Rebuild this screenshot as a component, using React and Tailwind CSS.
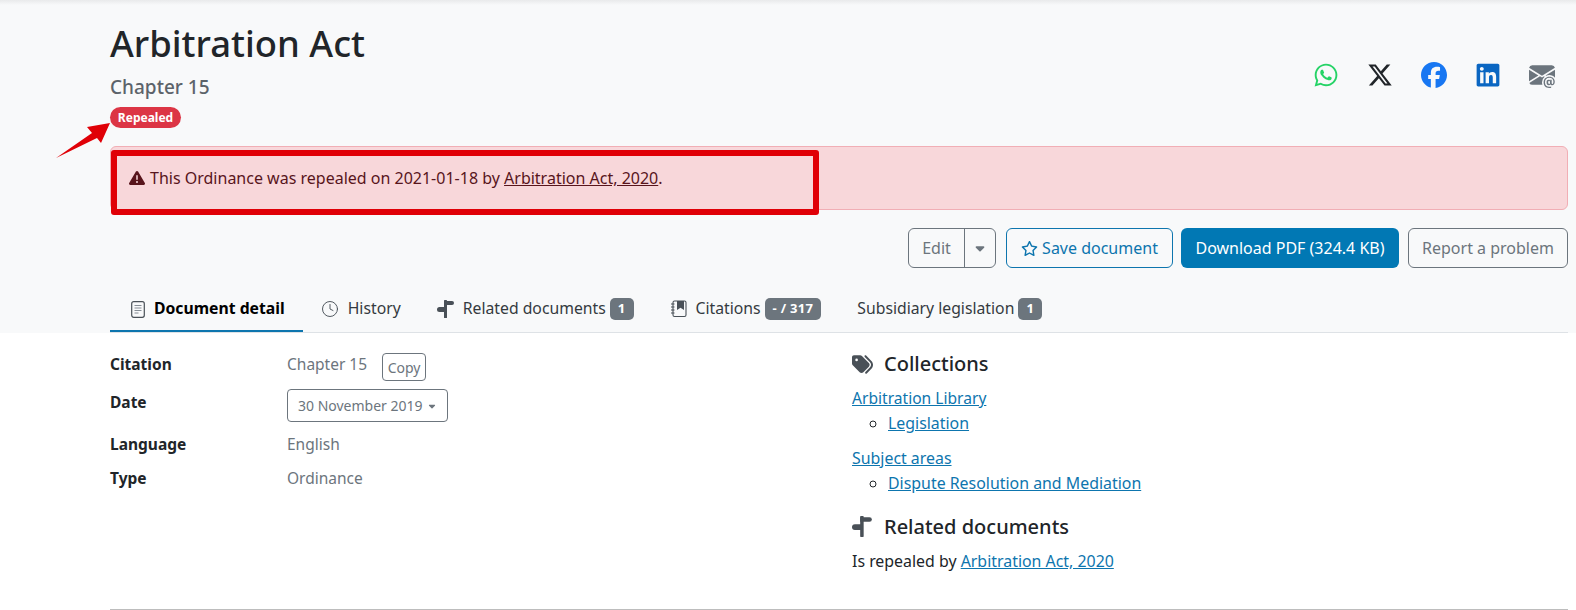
import React from "react";
import { FaWhatsapp, FaFacebook, FaLinkedin, FaXTwitter, FaRegStar, FaTags, FaTriangleExclamation, FaCaretDown } from "react-icons/fa6";
import { BsEnvelopeAtFill } from "react-icons/bs";
import { Clock } from "lucide-react";

const BookIcon = () => (
  <svg width="18" height="18" viewBox="0 0 18 18" fill="none" className="text-[#495057]">
    <rect x="3" y="1" width="13" height="15.5" rx="1.5" stroke="currentColor" strokeWidth="1.1" />
    <path d="M7 1h7v9l-3.5-2.2L7 10z" fill="currentColor" />
    <path d="M1 4h3.5M1 7h3.5M1 10h3.5M1 13h3.5" stroke="currentColor" strokeWidth="1.1" />
  </svg>
);

const DocIcon = () => (
  <svg width="14" height="17" viewBox="0 0 14 17" fill="none" className="text-[#495057]">
    <rect x="0.7" y="0.7" width="12.6" height="15.6" rx="2" stroke="currentColor" strokeWidth="1.2" />
    <path d="M3.5 4.5h7M3.5 7h7M3.5 9.5h7M3.5 12h4" stroke="#868e96" strokeWidth="1.2" />
  </svg>
);

const PostIcon = ({ size = 18 }) => (
  <svg width={size} height={size} viewBox="0 0 18 18" fill="#495057">
    <rect x="7" y="0" width="3" height="18" rx="0.6" />
    <path d="M7 1h8a2 2 0 0 1 2 2v0a2 2 0 0 1-2 2H7z" />
    <path d="M9 7H2.5a2.5 2.5 0 0 0 0 5H9z" />
  </svg>
);

const Badge = ({ children }) => (
  <span className="ml-[4px] inline-flex h-[22px] items-center rounded-[5px] bg-[#6c757d] px-[8px] text-[13px] font-bold tracking-[0.3px] text-white">
    {children}
  </span>
);

const Tab = ({ icon, label, badge, active, className }) => (
  <div
    className={`flex h-[46px] items-center border-b-2 pr-[18px] pt-[2px] text-[15.75px] ${
      active ? "border-[#0d75ae] font-bold text-black" : "border-transparent text-[#343a40]"
    } ${className || "gap-[8px] pl-[18px]"}`}
  >
    {icon}
    <span className="flex items-center">
      {label}
      {badge && <Badge>{badge}</Badge>}
    </span>
  </div>
);

const Row = ({ label, children, className, labelClass }) => (
  <div className={`flex ${className || ""}`}>
    <div className={`w-[177px] shrink-0 font-bold text-[#212529] ${labelClass || ""}`}>{label}</div>
    <div className="text-[#6c757d]">{children}</div>
  </div>
);

const linkCls = "text-[#0d75ae] underline";

const App = () => {
  return (
    <div className="h-[610px] overflow-hidden bg-white font-['Noto_Sans','Open_Sans',sans-serif] text-[15.5px] text-[#212529]">
      <div className="bg-[#f8f9fa] bg-gradient-to-b from-[#e9eaeb] to-[#f8f9fa] bg-[length:100%_5px] bg-no-repeat pl-[110px] pr-[8px] pt-[19px]">
        <div className="relative">
          <div className="flex items-start justify-between">
            <div>
              <h1 className="text-[36.4px] leading-[48px] font-medium text-[#212529]">Arbitration Act</h1>
              <div className="mt-[8px] text-[19px] leading-[24px] font-medium text-[#5c636a]">Chapter 15</div>
              <span className="mt-[8px] flex h-[21px] w-[71px] items-center justify-center rounded-full bg-[#dc3545] text-[12px] font-bold text-white">
                Repealed
              </span>
            </div>
            <div className="mt-[43px] mr-[13px] flex items-center gap-[28px]">
              <FaWhatsapp size={26} className="text-[#25d366]" />
              <FaXTwitter size={26} className="text-[#212529]" />
              <FaFacebook size={26} className="text-[#1877f2]" />
              <FaLinkedin size={26} className="text-[#0a66c2]" />
              <BsEnvelopeAtFill size={26} className="text-[#6c757d]" />
            </div>
          </div>
          <svg width="56" height="38" viewBox="0 0 56 38" className="absolute left-[-54px] top-[103px]">
            <path d="M0 36 L36 11 L31 5 L54 1 L45 21 L41 16 Z" fill="#e00007" />
          </svg>

          <div className="relative mt-[18px] flex h-[64px] items-center rounded-[6px] border border-[#f1aeb5] bg-[#f8d7da] px-[18px] text-[16px] text-[#58151c]">
            <FaTriangleExclamation size={16} className="mr-[5px]" />
            <span>
              This Ordinance was repealed on 2021-01-18 by <span className="underline">Arbitration Act, 2020</span>.
            </span>
            <div className="absolute left-0 top-[3px] h-[65px] w-[708px] rounded-[3px] border-[6px] border-[#e00007]" />
          </div>

          <div className="mt-[18px] flex justify-end gap-[8px] text-[16px]">
            <div className="mr-[2px] flex h-[40px] rounded-[6px] border border-[#6c757d] text-[#6c757d]">
              <span className="flex w-[56px] items-center justify-center border-r border-[#6c757d]">Edit</span>
              <span className="flex w-[30px] items-center justify-center"><FaCaretDown size={14} /></span>
            </div>
            <div className="flex h-[40px] w-[167px] items-center justify-center gap-[4px] rounded-[6px] border border-[#0d75ae] text-[#0d75ae]">
              <FaRegStar size={17} />
              Save document
            </div>
            <div className="flex h-[40px] w-[218px] items-center justify-center rounded-[6px] bg-[#0178b4] text-white">
              Download PDF (324.4 KB)
            </div>
            <div className="ml-[1px] flex h-[40px] w-[160px] items-center justify-center rounded-[6px] border border-[#6c757d] text-[#6c757d]">
              Report a problem
            </div>
          </div>

          <div className="mt-[18px] flex border-b border-[#dee2e6]">
            <Tab active className="gap-[9px] pl-[21px]" icon={<DocIcon />} label="Document detail" />
            <Tab className="gap-[9px] pl-[18px]" icon={<Clock size={18} strokeWidth={1.25} className="text-[#495057]" />} label="History" />
            <Tab icon={<PostIcon />} label="Related documents" badge="1" />
            <Tab icon={<BookIcon />} label="Citations" badge="- / 317" />
            <Tab label="Subsidiary legislation" badge="1" />
          </div>
        </div>
      </div>

      <div className="pl-[110px] pr-[8px]">
        <div className="flex border-b border-[#bdbdbd] pb-[35px]">
          <div className="w-[742px] shrink-0 pt-[20px]">
            <Row label="Citation" className="items-start">
              <span className="flex items-start">
                Chapter 15
                <span className="ml-[15px] flex h-[28px] w-[44px] items-center justify-center rounded-[4px] border border-[#6c757d] text-[14px]">Copy</span>
              </span>
            </Row>
            <Row label="Date" className="mt-[8px]" labelClass="pt-[2px]">
              <span className="flex h-[33px] w-[161px] items-center justify-between rounded-[4px] border border-[#6c757d] px-[10px] text-[14px]">
                30 November 2019
                <FaCaretDown size={10} />
              </span>
            </Row>
            <Row label="Language" className="mt-[11px]">English</Row>
            <Row label="Type" className="mt-[11px]">Ordinance</Row>
          </div>
          <div className="pt-[18px] text-[15.9px]">
            <h4 className="flex items-center gap-[11px] text-[20px] font-medium leading-[26px]">
              <FaTags size={21} className="text-[#495057]" />
              Collections
            </h4>
            <div className="mt-[10px] text-[15.6px]"><span className={linkCls}>Arbitration Library</span></div>
            <ul className="mt-[2px] list-[circle] pl-[36px]">
              <li><span className={linkCls}>Legislation</span></li>
            </ul>
            <div className="mt-[11px]"><span className={linkCls}>Subject areas</span></div>
            <ul className="mt-[1px] list-[circle] pl-[36px]">
              <li><span className={linkCls}>Dispute Resolution and Mediation</span></li>
            </ul>
            <h4 className="mt-[18px] flex items-center gap-[11px] text-[20px] font-medium leading-[26px]">
              <PostIcon size={21} />
              Related documents
            </h4>
            <div className="mt-[10px]">
              Is repealed by <span className={linkCls}>Arbitration Act, 2020</span>
            </div>
          </div>
        </div>
      </div>
    </div>
  );
};

export default App;
